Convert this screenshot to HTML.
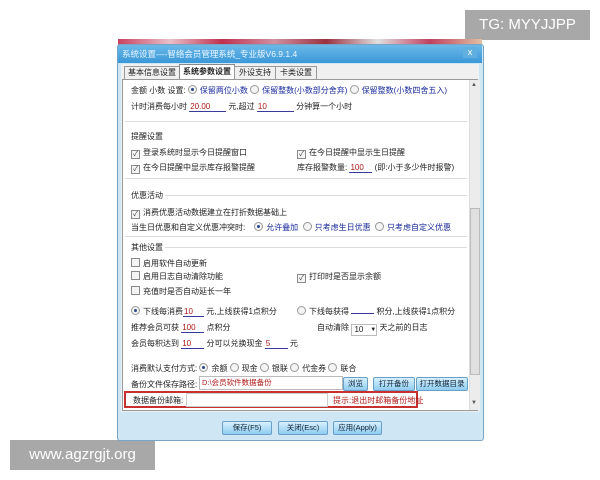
<!DOCTYPE html><html><head><meta charset="utf-8"><style>
body{margin:0;width:600px;height:480px;background:#fff;position:relative;overflow:hidden;font-family:"Liberation Sans","Noto Sans CJK SC",sans-serif;font-size:8px;color:#222}
.a{position:absolute;white-space:nowrap}
.b{color:#1a2a9a}
.r{color:#b01818}
.cb{display:inline-block;width:7px;height:7px;border:1px solid #8a8a8a;background:#f4f4f4;vertical-align:-1px;margin-right:3px;font-size:7px;line-height:7px;text-align:center;color:#333}
.rd{display:inline-block;width:7px;height:7px;border:1px solid #999;border-radius:50%;background:#f4f4f4;vertical-align:-1px;margin-right:3px;position:relative}
.rd.on::after{content:"";position:absolute;left:2px;top:2px;width:3px;height:3px;border-radius:50%;background:#2a4a8a}
.u{display:inline-block;border-bottom:1px solid #3a3a9a;color:#b01818;padding-left:1px}
.btn{position:absolute;height:12px;border:1px solid #6aa0c8;border-radius:2px;background:linear-gradient(#d8f0ff,#8fcdf0);font-size:7.5px;text-align:center;line-height:12px;color:#123}
.gl{position:absolute;height:1px;background:#dcdcdc}
</style></head><body>
<div class="a" style="left:465px;top:10px;width:125px;height:30px;background:#a8a8a8;color:#fff;font-size:15px;line-height:30px;text-align:center">TG: MYYJJPP</div>
<div class="a" style="left:10px;top:440px;width:145px;height:30px;background:#a8a8a8;color:#fff;font-size:15px;line-height:30px;text-align:center">www.agzrgjt.org</div>
<div class="a" style="left:118px;top:39px;width:364px;height:6px;background:linear-gradient(90deg,#c94060,#e8c0c8,#c03050,#d090a0,#9a3040,#e0e0e0,#c04060,#e0c0a0)"></div>
<div class="a" style="left:117px;top:44px;width:365px;height:395px;background:#cfe6f5;border:1px solid #7aa4c4;border-radius:3px"></div>
<div class="a" style="left:118px;top:45px;width:364px;height:18px;background:linear-gradient(#6ab8e8,#3a98d8);color:#eaf6ff;font-size:8.5px;line-height:18px;padding-left:4px;box-sizing:border-box">系统设置----智络会员管理系统_专业版V6.9.1.4</div>
<div class="a" style="left:463px;top:47px;width:14px;height:11px;color:#fff;font-size:9px;text-align:center;line-height:11px;background:#5fb0e0">x</div>
<div class="a" style="left:121px;top:64px;width:358px;height:348px;background:#f0f0f0"></div>
<div class="a" style="left:124px;top:66px;width:54px;height:12px;border:1px solid #999;border-bottom:none;background:#f0f0f0;line-height:12px;text-align:center">基本信息设置</div>
<div class="a" style="left:179px;top:64px;width:54px;height:15px;border:1px solid #888;border-bottom:none;background:#fff;line-height:14px;text-align:center;font-weight:bold">系统参数设置</div>
<div class="a" style="left:234px;top:66px;width:40px;height:12px;border:1px solid #999;border-bottom:none;background:#f0f0f0;line-height:12px;text-align:center">外设支持</div>
<div class="a" style="left:275px;top:66px;width:40px;height:12px;border:1px solid #999;border-bottom:none;background:#f0f0f0;line-height:12px;text-align:center">卡类设置</div>
<div class="a" style="left:122px;top:79px;width:356px;height:332px;background:#fff;border:1px solid #999;box-sizing:border-box"></div>
<div class="a" style="left:469px;top:80px;width:10px;height:330px;background:#ececec;border-left:1px solid #ddd"></div>
<div class="a" style="left:470px;top:208px;width:8px;height:165px;background:#e0e0e0;border:1px solid #bbb"></div>
<div class="a" style="left:471px;top:82px;font-size:6px;color:#555">▲</div>
<div class="a" style="left:471px;top:400px;font-size:6px;color:#555">▼</div>

<div class="a" style="left:131px;top:85px">金额 小数 设置: <span class="rd on"></span><span class="b">保留两位小数</span> <span class="rd"></span><span class="b">保留整数(小数部分舍弃)</span> <span class="rd"></span><span class="b">保留整数(小数四舍五入)</span></div>
<div class="a" style="left:131px;top:101px">计时消费每小时 <span class="u" style="width:36px">20.00</span> 元,超过 <span class="u" style="width:36px">10</span> 分钟算一个小时</div>
<div class="gl" style="left:125px;top:121px;width:342px"></div>
<div class="a" style="left:131px;top:131px">提醒设置</div>
<div class="a" style="left:131px;top:147px"><span class="cb">✓</span>登录系统时显示今日提醒窗口</div>
<div class="a" style="left:297px;top:147px"><span class="cb">✓</span>在今日提醒中显示生日提醒</div>
<div class="a" style="left:131px;top:162px"><span class="cb">✓</span>在今日提醒中显示库存报警提醒</div>
<div class="a" style="left:297px;top:162px">库存报警数量: <span class="u" style="width:22px">100</span> (即:小于多少件时报警)</div>
<div class="gl" style="left:125px;top:178px;width:342px"></div>
<div class="a" style="left:131px;top:190px">优惠活动</div>
<div class="gl" style="left:165px;top:195px;width:302px"></div>
<div class="a" style="left:131px;top:207px"><span class="cb">✓</span>消费优惠活动数据建立在打折数据基础上</div>
<div class="a" style="left:131px;top:222px">当生日优惠和自定义优惠冲突时: &nbsp;&nbsp;&nbsp;<span class="rd on"></span><span class="b">允许叠加</span> &nbsp;<span class="rd"></span><span class="b">只考虑生日优惠</span> &nbsp;<span class="rd"></span><span class="b">只考虑自定义优惠</span></div>
<div class="gl" style="left:125px;top:236px;width:342px"></div>
<div class="a" style="left:131px;top:242px">其他设置</div>
<div class="gl" style="left:165px;top:247px;width:302px"></div>
<div class="a" style="left:131px;top:258px"><span class="cb"></span>启用软件自动更新</div>
<div class="a" style="left:131px;top:271px"><span class="cb"></span>启用日志自动清除功能</div>
<div class="a" style="left:297px;top:271px"><span class="cb">✓</span>打印时是否显示余额</div>
<div class="a" style="left:131px;top:286px"><span class="cb"></span>充值时是否自动延长一年</div>
<div class="a" style="left:131px;top:306px"><span class="rd on"></span>下线每消费<span class="u" style="width:20px">10</span> 元,上线获得1点积分</div>
<div class="a" style="left:297px;top:306px"><span class="rd"></span>下线每获得 <span class="u" style="width:22px"></span> 积分,上线获得1点积分</div>
<div class="a" style="left:131px;top:322px">推荐会员可获 <span class="u" style="width:22px">100</span> 点积分</div>
<div class="a" style="left:317px;top:322px">自动清除 <span style="display:inline-block;width:24px;height:10px;border:1px solid #bbb;vertical-align:-2px;font-size:8px;line-height:10px">&nbsp;10 <span style="float:right;font-size:6px">▼</span></span> 天之前的日志</div>
<div class="a" style="left:131px;top:338px">会员每积达到 <span class="u" style="width:22px">10</span> 分可以兑换现金 <span class="u" style="width:22px">5</span> 元</div>
<div class="a" style="left:131px;top:363px">消费默认支付方式: <span class="rd on"></span>余额 <span class="rd"></span>现金 <span class="rd"></span>银联 <span class="rd"></span>代金券 <span class="rd"></span>联合</div>
<div class="a" style="left:131px;top:379px">备份文件保存路径:</div>
<div class="a r" style="left:199px;top:376px;width:140px;height:12px;border:1px solid #bbb;font-size:7.5px;line-height:12px;padding-left:2px">D:\会员软件数据备份</div>
<div class="btn" style="left:343px;top:377px;width:23px">浏览</div>
<div class="btn" style="left:373px;top:377px;width:40px">打开备份</div>
<div class="btn" style="left:416px;top:377px;width:50px">打开数据目录</div>
<div class="a" style="left:124px;top:391px;width:294px;height:17px;border:2px solid #c83030;box-sizing:border-box"></div>
<div class="a" style="left:133px;top:395px">数据备份邮箱:</div>
<div class="a" style="left:186px;top:393px;width:140px;height:12px;border:1px solid #ccc"></div>
<div class="a r" style="left:333px;top:395px">提示:退出时邮箱备份地址</div>
<div class="btn" style="left:222px;top:421px;width:48px">保存(F5)</div>
<div class="btn" style="left:278px;top:421px;width:48px">关闭(Esc)</div>
<div class="btn" style="left:333px;top:421px;width:47px">应用(Apply)</div>
</body></html>
